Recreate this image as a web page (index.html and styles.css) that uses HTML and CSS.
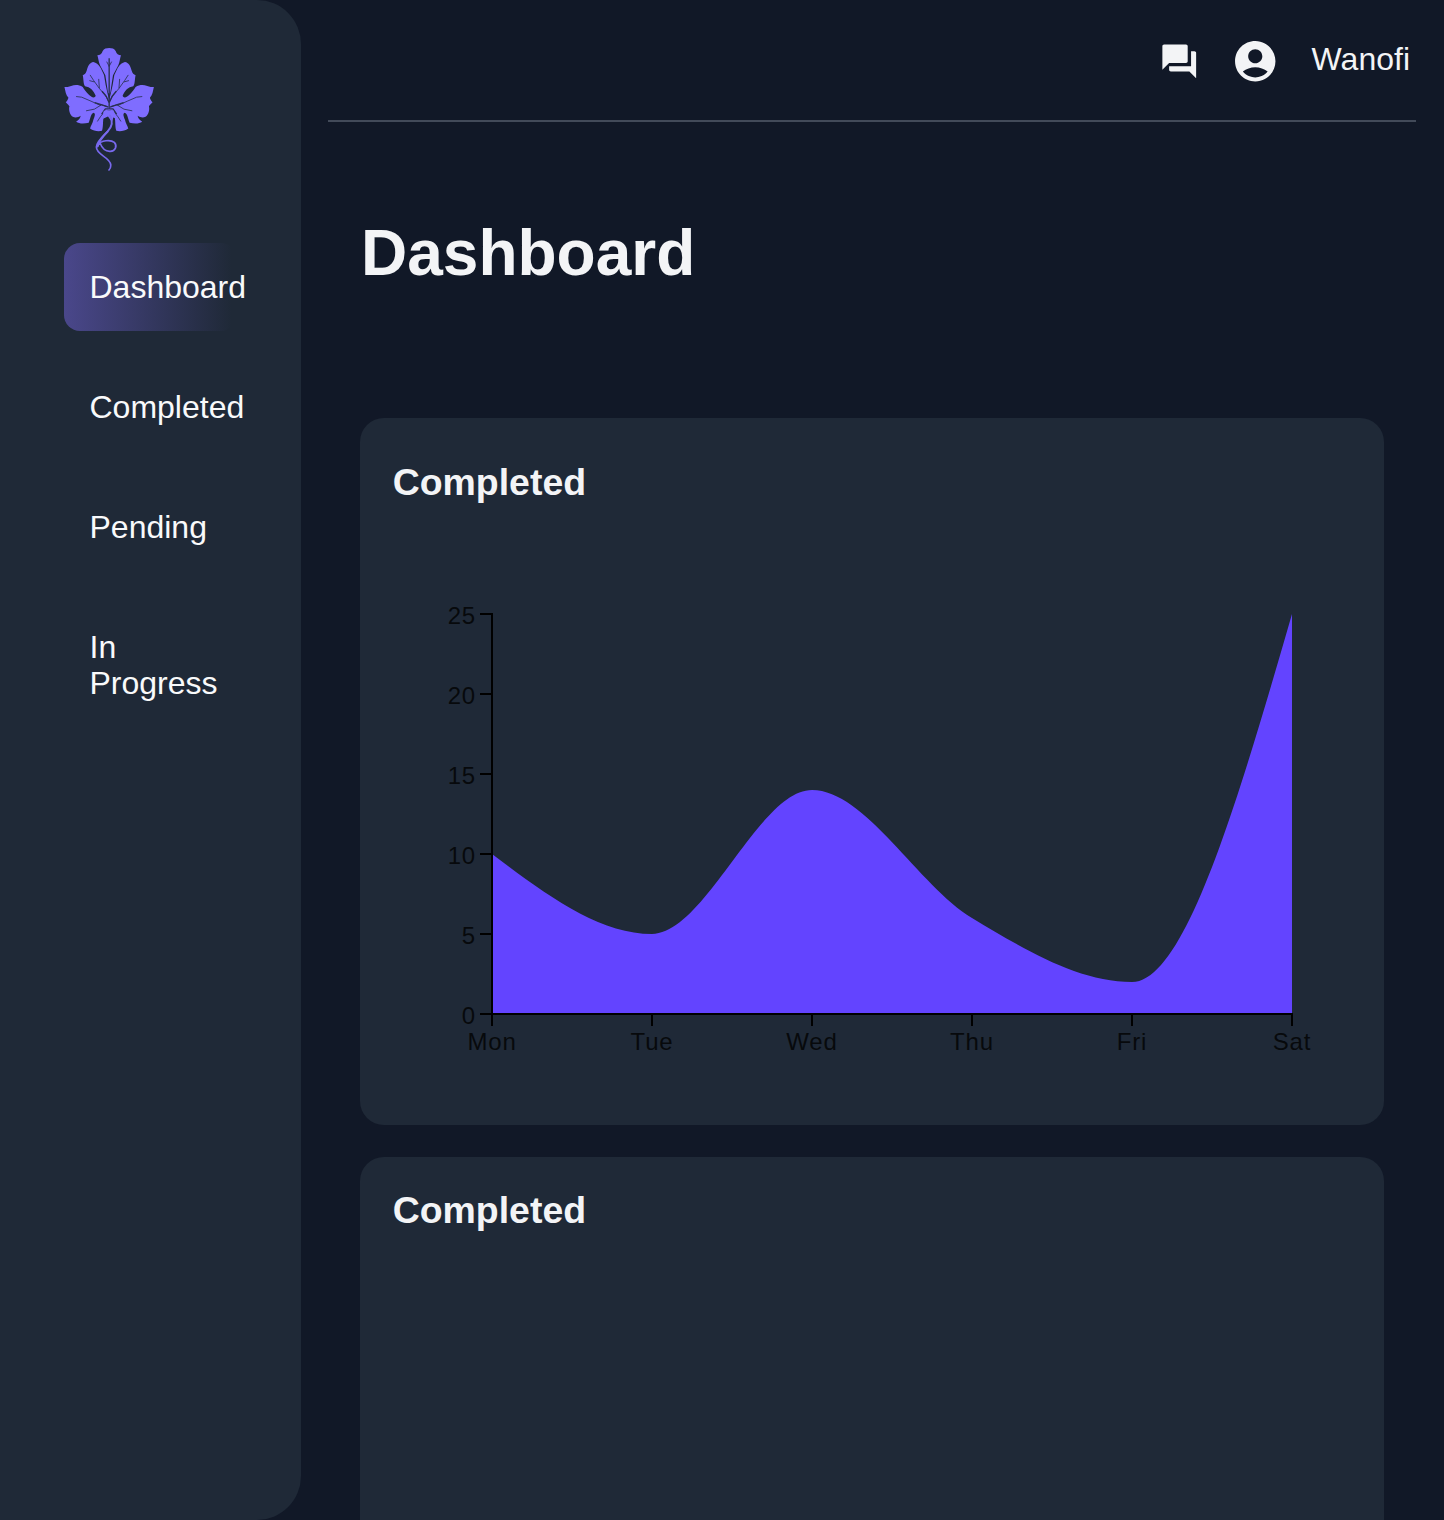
FILE: index.html
```
<!DOCTYPE html>
<html lang="en">
<head>
<meta charset="utf-8">
<title>Dashboard</title>
<link rel="stylesheet" href="styles.css">
</head>
<body>
<div class="app">
  <aside class="sidebar">
    <svg class="logo" viewBox="30 24 270 370" aria-hidden="true">
      <defs>
        <g id="half-leaf">
          <path class="leaf" d="M166 24C157 24 150 26 146 33C143 42 138 46 130 46C133 54 133 65 138 76L154 106L162 158L166 162Z"/>
          <path class="leaf" d="M118 66C107 67 101 79 98 92C95 101 92 104 86 106C89 117 87 131 93 139C108 141 119 152 125 168C122 176 112 173 103 163C96 155 91 149 86 141C75 135 64 134 51 138C44 141 37 141 31 141C34 154 35 165 43 174C41 181 38 185 35 187C40 193 44 196 46 199C43 209 47 224 56 231C64 235 72 233 80 228C78 238 71 242 66 246C76 253 91 252 104 249C110 234 110 222 119 219C126 222 121 232 118 240C116 251 110 258 108 266C119 275 135 275 144 273C149 258 145 239 151 226L155 214L166 210L166 183L161 162L155 135L150 105L140 84C133 73 126 68 118 66Z"/>
          <path class="vein" d="M163 183L154 166L137 147L119 122L108 105M136 145L134 117M121 126L106 122M160 200L142 195L121 208L96 213M140 197L111 184L83 172L66 170M155 211L139 231L130 245M166 80L158 65"/>
          <path class="vein core" d="M165 188L157 170L144 154M163 202L146 196L122 188M164 207L154 207L143 223"/>
        </g>
      </defs>
      <use href="#half-leaf"/>
      <use href="#half-leaf" transform="matrix(-1 0 0 1 331 0)"/>
      <path class="vein stem" d="M165.500 55L165.500 208"/>
      <path class="leaf" d="M148 216L153 211L178 211L184 224L188 237L178 233L174 247L162 230L147 237Z"/>
      <path class="tendril thick" d="M168 227C179 247 173 262 161 275C147 289 134 305 131 320"/>
      <path class="tendril" d="M161 275C145 291 127 306 127 322C127 347 169 352 170 375C171 383 168 388 165 391"/>
      <path class="tendril" d="M132 317C140 300 171 300 181 308C191 319 184 334 169 335C153 336 143 323 138 310"/>
    </svg>
    <nav class="menu">
      <a class="menu-item active">Dashboard</a>
      <a class="menu-item">Completed</a>
      <a class="menu-item">Pending</a>
      <a class="menu-item">In Progress</a>
    </nav>
  </aside>
  <main class="content">
    <header class="topbar">
      <svg class="icon-chat" viewBox="0 0 24 24"><path d="M21 6h-2v9H6v2c0 .55.45 1 1 1h11l4 4V7c0-.55-.45-1-1-1zm-4 6V3c0-.55-.45-1-1-1H3c-.55 0-1 .45-1 1v14l4-4h10c.55 0 1-.45 1-1z"/></svg>
      <svg class="icon-user" viewBox="0 0 24 24"><path d="M12 2C6.480 2 2 6.480 2 12s4.480 10 10 10 10-4.480 10-10S17.520 2 12 2zm0 4c1.930 0 3.500 1.570 3.500 3.500S13.930 13 12 13s-3.500-1.570-3.500-3.500S10.070 6 12 6zm0 14c-2.030 0-4.430-.820-6.140-2.880C7.550 15.800 9.680 15 12 15s4.450.800 6.140 2.120C16.430 19.180 14.030 20 12 20z"/></svg>
      <span class="username">Wanofi</span>
    </header>
    <h1 class="title">Dashboard</h1>
    <section class="cards">
      <article class="card chart-card">
        <h3 class="card-title">Completed</h3>
        <svg class="chart" viewBox="0 0 960 520">
          <path class="area" d="M100 300C153.330 340 206.670 380 260 380C313.330 380 366.670 236 420 236C473.330 236 526.670 332 580 364C633.330 396 686.670 428 740 428C793.330 428 846.670 244 900 60V460H100Z"/>
          <path class="axis" d="M100 59V461M88 60H100M88 140H100M88 220H100M88 300H100M88 380H100M88 460H100"/>
          <path class="axis" d="M99 460H901M100 460V472M260 460V472M420 460V472M580 460V472M740 460V472M900 460V472"/>
          <g class="labels y-labels">
            <text x="84" y="70">25</text><text x="84" y="150">20</text><text x="84" y="230">15</text>
            <text x="84" y="310">10</text><text x="84" y="390">5</text><text x="84" y="470">0</text>
          </g>
          <g class="labels x-labels">
            <text x="100" y="496">Mon</text><text x="260" y="496">Tue</text><text x="420" y="496">Wed</text>
            <text x="580" y="496">Thu</text><text x="740" y="496">Fri</text><text x="900" y="496">Sat</text>
          </g>
        </svg>
      </article>
      <article class="card empty-card">
        <h3 class="card-title">Completed</h3>
      </article>
    </section>
  </main>
</div>
</body>
</html>
```
FILE: styles.css
```
* { box-sizing: border-box; }
body {
  margin: 0;
  background: #111827;
  color: #f3f4f6;
  font-family: "Liberation Sans", Arial, sans-serif;
  font-size: 32px;
}
.app { display: flex; height: 1520px; overflow: hidden; }
.sidebar {
  width: 301px;
  height: 1520px;
  flex: none;
  padding: 48px 64px 0;
  background: #1f2937;
  border-radius: 0 44px 44px 0;
}
.logo { display: block; width: 90px; height: 123px; }
.leaf { fill: #7f6dff; }
.vein { fill: none; stroke: #28304f; stroke-width: 2.5; stroke-linejoin: round; }
.core { stroke-width: 4; }
.stem { stroke-width: 4; }
.tendril { fill: none; stroke: #7869ed; stroke-width: 5; stroke-linecap: round; }
.thick { stroke-width: 6; }
.menu { display: flex; flex-direction: column; gap: 32px; margin-top: 72px; }
.menu-item {
  padding: 26px 26px 26px 25.5px;
  line-height: 36px;
  border-radius: 16px;
  color: #f9fafb;
}
.active { background: linear-gradient(90deg, #4a478b, rgba(74, 71, 139, 0) 97%); }
.content { flex: 1; padding: 0 28px 0 27px; }
.topbar {
  display: flex;
  align-items: center;
  justify-content: flex-end;
  height: 122px;
  padding-top: 2px;
  padding-right: 6px;
  border-bottom: 2px solid #424a59;
}
.topbar svg { fill: #f3f4f6; }
.icon-chat { width: 40.5px; height: 40.5px; margin-right: 31.5px; }
.icon-user { width: 48.5px; height: 48.5px; margin-right: 32.5px; }
.username { line-height: 36px; margin-top: -4px; }
.title { margin: 94px 32px 0 33px; font-size: 64px; line-height: 74px; }
.cards { display: flex; flex-direction: column; gap: 32px; margin: 128px 32px 0; }
.card { border-radius: 24px; background: #1f2937; padding: 0 32px; }
.chart-card { height: 707px; padding-top: 43px; }
.empty-card { height: 707px; padding-top: 32px; }
.card-title { margin: 0 0 0 .7px; font-size: 37.44px; line-height: 42px; }
.chart { display: block; width: 960px; height: 520px; margin-top: 51px; }
.area { fill: #6344ff; }
.axis { fill: none; stroke: #000; stroke-width: 2; }
.labels { fill: #07090c; font-size: 24px; letter-spacing: .8px; }
.y-labels { text-anchor: end; }
.x-labels { text-anchor: middle; }
```
